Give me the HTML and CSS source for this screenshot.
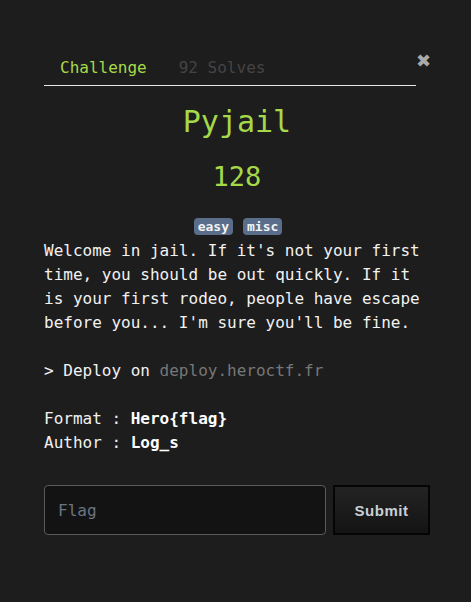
FILE: index.html
```html
<!DOCTYPE html>
<html>
<head>
<meta charset="utf-8">
<link rel="stylesheet" href="styles.css">
</head>
<body>
<div class="modal">
  <div class="header">
    <ul class="tabs">
      <li class="tab active">Challenge</li>
      <li class="tab">92 Solves</li>
    </ul>
    <button class="close">&#x2716;</button>
  </div>
  <h2 class="title">Pyjail</h2>
  <h3 class="value">128</h3>
  <div class="tags">
    <span class="badge">easy</span>
    <span class="badge">misc</span>
  </div>
  <div class="desc">
    <p>Welcome in jail. If it's not your first time, you should be out quickly. If it is your first rodeo, people have escape before you... I'm sure you'll be fine.</p>
    <p>&gt; Deploy on <code>deploy.heroctf.fr</code></p>
    <p>Format : <strong>Hero{flag}</strong><br>Author : <strong>Log_s</strong></p>
  </div>
  <form class="submit-row">
    <input class="flag" type="text" placeholder="Flag">
    <button class="submit" type="button">Submit</button>
  </form>
</div>
</body>
</html>
```
FILE: styles.css
```css
html, body {
  margin: 0;
  padding: 0;
  background: #1d1d1d;
  height: 100%;
}
body {
  font-family: "DejaVu Sans Mono", monospace;
  color: #f2f2f2;
  font-size: 16px;
}
.modal {
  width: 386px;
  margin-left: 44px;
  padding-top: 48px;
}
.header {
  display: flex;
  align-items: flex-start;
}
.tabs {
  list-style: none;
  margin: 0;
  padding: 0;
  display: flex;
  width: 372px;
  border-bottom: 1px solid #e6e6e6;
  height: 38px;
  box-sizing: border-box;
}
.tab {
  padding: 10px 16px 0 16px;
  color: #444;
  line-height: 20px;
}
.tab.active {
  color: #a6d94a;
}
.close {
  background: none;
  border: none;
  padding: 0;
  margin: 2px 0 0 0;
  width: 14px;
  text-align: right;
  color: #a9a9a9;
  font-size: 18px;
  line-height: 22px;
  font-family: "DejaVu Sans", sans-serif;
  font-weight: bold;
}
.title {
  margin: 16px 0 0 0;
  text-align: center;
  font-weight: normal;
  font-size: 30px;
  line-height: 40px;
  color: #a6d94a;
}
.value {
  margin: 17px 0 0 0;
  text-align: center;
  font-weight: normal;
  font-size: 27px;
  line-height: 36px;
  color: #a6d94a;
}
.tags {
  display: flex;
  justify-content: center;
  gap: 10px;
  margin-top: 23px;
  padding-left: 2px;
}
.badge {
  background: #5a6d8b;
  color: #f4f4f4;
  font-weight: bold;
  font-size: 13px;
  line-height: 17px;
  padding: 0 4px;
  border-radius: 4px;
}
.desc {
  margin-top: 4px;
  line-height: 24px;
}
.desc p {
  margin: 0 0 24px 0;
}
.desc code {
  font-family: "DejaVu Sans Mono", monospace;
  color: #777;
  font-size: 16px;
}
.desc strong {
  color: #fff;
}
.submit-row {
  display: flex;
  gap: 7px;
  margin-top: 30px;
}
.flag {
  width: 282px;
  height: 50px;
  box-sizing: border-box;
  background: #131313;
  border: 1px solid #5a5a5a;
  border-radius: 4px;
  padding: 0 13px;
  font-family: "DejaVu Sans Mono", monospace;
  font-size: 16px;
  color: #eee;
}
.flag::placeholder {
  color: #6b7580;
}
.submit {
  width: 97px;
  height: 50px;
  box-sizing: border-box;
  border: 2px solid #050505;
  background: linear-gradient(#232323, #141414);
  color: #c8d0d8;
  font-family: "Liberation Sans", Arial, sans-serif;
  font-weight: bold;
  font-size: 15px;
  letter-spacing: 0.5px;
}
```
